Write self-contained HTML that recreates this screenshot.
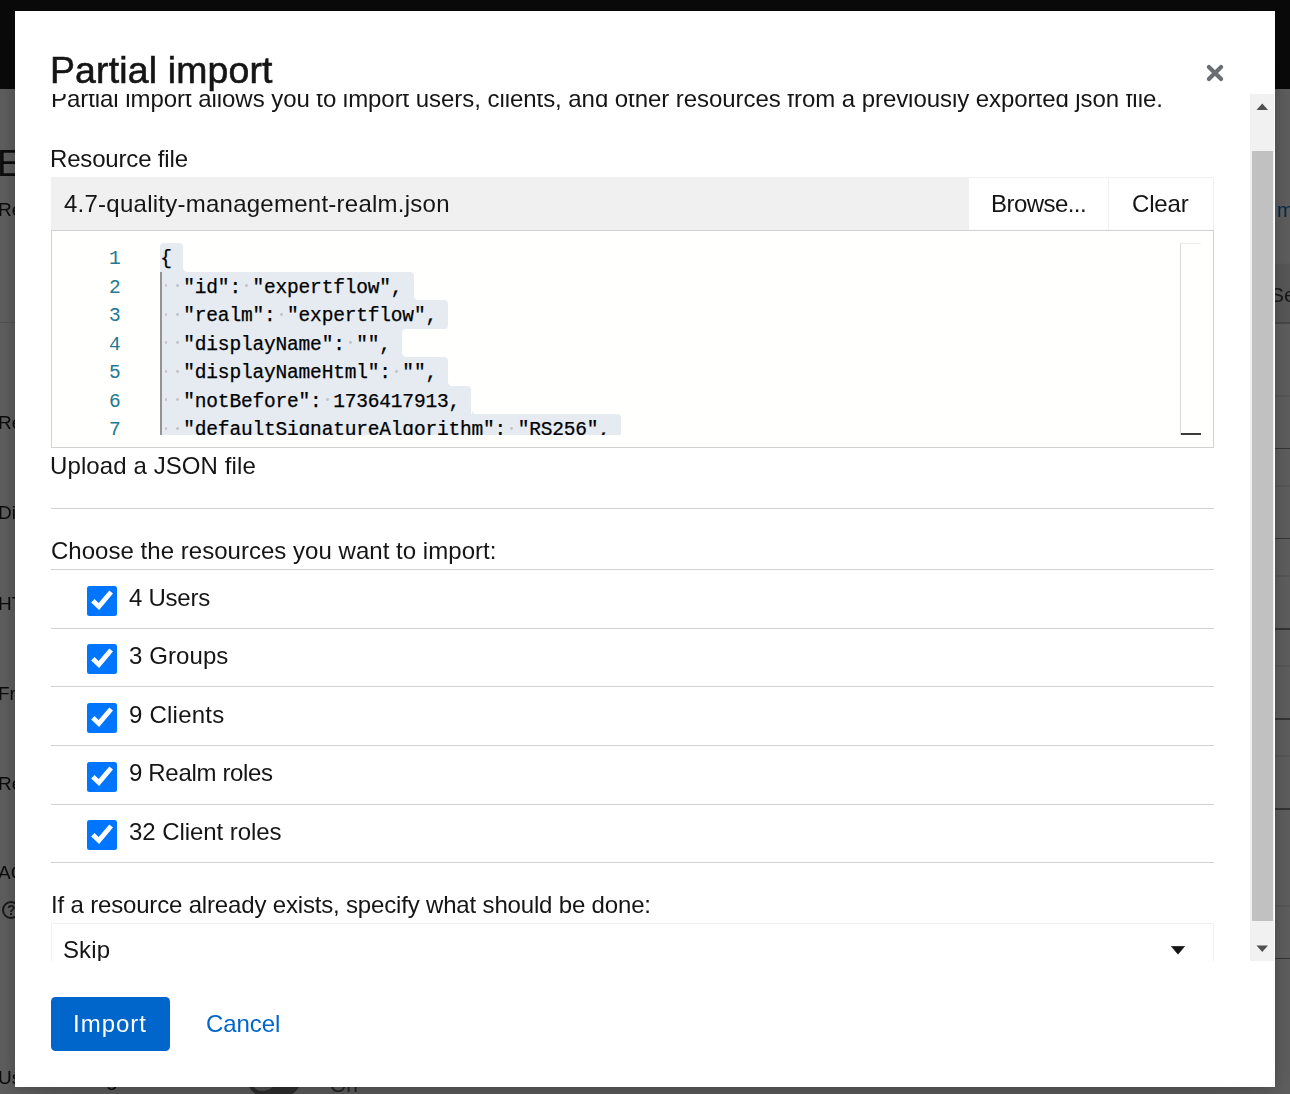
<!DOCTYPE html><html><head><meta charset="utf-8"><style>
*{box-sizing:border-box}
html,body{margin:0;padding:0}
body{width:1290px;height:1094px;overflow:hidden;position:relative;background:#616161;font-family:"Liberation Sans",sans-serif}
.t{position:absolute;white-space:pre;will-change:transform}
.t.m{will-change:auto}
.abs{position:absolute}
.m{font-family:"Liberation Mono",monospace}
</style></head><body><div class="abs" style="left:0;top:0;width:1290px;height:89px;background:#0a0a0a"></div><div class="t" style="left:-3.2px;top:144.99px;font-size:37.8px;line-height:37.8px;color:#0c0c0c">E</div><div class="t" style="left:-2.2px;top:200.31px;font-size:19px;line-height:19px;color:#0c0c0c">Re</div><div class="abs" style="left:0;top:322px;width:15px;height:1px;background:#565656"></div><div class="t" style="left:-2.2px;top:413.31px;font-size:19px;line-height:19px;color:#0c0c0c">Re</div><div class="t" style="left:-2.2px;top:502.91px;font-size:19px;line-height:19px;color:#0c0c0c">Di</div><div class="t" style="left:-2.2px;top:593.51px;font-size:19px;line-height:19px;color:#0c0c0c">HT</div><div class="t" style="left:-2.2px;top:683.91px;font-size:19px;line-height:19px;color:#0c0c0c">Fr</div><div class="t" style="left:-2.2px;top:774.41px;font-size:19px;line-height:19px;color:#0c0c0c">Re</div><div class="t" style="left:-2.2px;top:863.21px;font-size:19px;line-height:19px;color:#0c0c0c">AC</div><div class="t" style="left:-2.2px;top:1068.41px;font-size:19px;line-height:19px;color:#0c0c0c">Us</div><div class="abs" style="left:2px;top:901px;width:18px;height:18px;border:2px solid #1a1a1a;border-radius:50%"></div><div class="t" style="left:7px;top:901px;font-size:14px;line-height:18px;color:#1a1a1a;font-weight:bold">?</div><div class="t" style="left:1277px;top:199.57px;font-size:20px;line-height:20px;color:#02294f">m</div><div class="abs" style="left:1275px;top:263px;width:15px;height:59px;background:#5a5a5a;border-top:1px solid #5f5f5f"></div><div class="t" style="left:1270px;top:284.22px;font-size:21px;line-height:21px;color:#1a1a1a">Se</div><div class="abs" style="left:1275px;top:322px;width:15px;height:1.5px;background:#4a4a4a"></div><div class="abs" style="left:1275px;top:395px;width:15px;height:1.5px;background:#5a5a5a"></div><div class="abs" style="left:1275px;top:447.5px;width:15px;height:1.5px;background:#363636"></div><div class="abs" style="left:1275px;top:485px;width:15px;height:1.5px;background:#5a5a5a"></div><div class="abs" style="left:1275px;top:537.5px;width:15px;height:1.5px;background:#363636"></div><div class="abs" style="left:1275px;top:575px;width:15px;height:1.5px;background:#5a5a5a"></div><div class="abs" style="left:1275px;top:628px;width:15px;height:1.5px;background:#363636"></div><div class="abs" style="left:1275px;top:665px;width:15px;height:1.5px;background:#5a5a5a"></div><div class="abs" style="left:1275px;top:718px;width:15px;height:1.5px;background:#363636"></div><div class="abs" style="left:1275px;top:755px;width:15px;height:1.5px;background:#5a5a5a"></div><div class="abs" style="left:1275px;top:808px;width:15px;height:1.5px;background:#363636"></div><div class="abs" style="left:1275px;top:905px;width:15px;height:1.5px;background:#5a5a5a"></div><div class="abs" style="left:1275px;top:957.5px;width:15px;height:1.5px;background:#363636"></div><div class="t" style="left:106px;top:1068.22px;font-size:21px;line-height:21px;color:#0c0c0c">g</div><div class="abs" style="left:245px;top:1050px;width:58px;height:48px;border-radius:24px;background:#303030"></div><div class="abs" style="left:249px;top:1061px;width:28px;height:30px;border-radius:50%;background:#585858"></div><div class="t" style="left:330px;top:1074.22px;font-size:21px;line-height:21px;color:#262626">On</div><div class="abs" style="left:15px;top:11px;width:1260px;height:1076px;background:#fff;box-shadow:0 24px 48px rgba(3,3,3,.16),0 0 12px rgba(3,3,3,.18)"></div><div class="t" style="left:49.60px;top:51.53px;font-size:37.4px;line-height:37.4px;color:#151515;letter-spacing:0.17px;-webkit-text-stroke:0.6px #151515">Partial import</div><svg class="abs" style="left:1203px;top:61px" width="24" height="24" viewBox="0 0 24 24"><path d="M5.9 5.9L18.1 18.1M18.1 5.9L5.9 18.1" stroke="#6a6e73" stroke-width="4.2" stroke-linecap="round"/></svg><div class="abs" style="left:15px;top:94px;width:1235px;height:867px;overflow:hidden"><div class="t" style="left:35.70px;top:-7.32px;font-size:24px;line-height:24px;color:#151515;letter-spacing:-0.055px;">Partial import allows you to import users, clients, and other resources from a previously exported json file.</div><div class="t" style="left:35.20px;top:52.58px;font-size:24px;line-height:24px;color:#151515;letter-spacing:-0.17px;">Resource file</div><div class="abs" style="left:36.00px;top:83.00px;width:918.00px;height:53.00px;background:#f0f0f0"></div><div class="abs" style="left:954.00px;top:83.00px;width:245.00px;height:53.00px;border:1px solid #f0f0f0;border-left:none;border-bottom:none;background:#fff"></div><div class="abs" style="left:1093.00px;top:83.00px;width:1.00px;height:53.00px;background:#f0f0f0"></div><div class="t" style="left:49.00px;top:97.78px;font-size:24px;line-height:24px;color:#151515;letter-spacing:0.25px;">4.7-quality-management-realm.json</div><div class="t" style="left:976.30px;top:97.68px;font-size:24px;line-height:24px;color:#151515;letter-spacing:-0.56px;">Browse...</div><div class="t" style="left:1117.30px;top:97.68px;font-size:24px;line-height:24px;color:#151515;letter-spacing:-0.15px;">Clear</div><div class="abs" style="left:36.00px;top:136.00px;width:1163.00px;height:218.00px;border:1px solid #d2d2d2;background:#fffffe"></div><div class="abs" style="left:37px;top:149px;width:1161px;height:192px;background:#fffffe;overflow:hidden"><div class="abs" style="left:108.20px;top:0.00px;width:23.06px;height:28.5px;background:#e5ebf1;border-radius:4px 4px 0px 0"></div><div class="abs" style="left:131.26px;top:24.50px;width:4px;height:4px;background:radial-gradient(circle at 100% 0%, rgba(229,235,241,0) 3.5px, #e5ebf1 4.3px)"></div><div class="abs" style="left:108.20px;top:28.50px;width:253.66px;height:28.5px;background:#e5ebf1;border-radius:0px 4px 0px 0"></div><div class="abs" style="left:361.86px;top:53.00px;width:4px;height:4px;background:radial-gradient(circle at 100% 0%, rgba(229,235,241,0) 3.5px, #e5ebf1 4.3px)"></div><div class="abs" style="left:108.20px;top:57.00px;width:288.25px;height:28.5px;background:#e5ebf1;border-radius:0px 4px 4px 0"></div><div class="abs" style="left:350.33px;top:85.50px;width:4px;height:4px;background:radial-gradient(circle at 100% 100%, rgba(229,235,241,0) 3.5px, #e5ebf1 4.3px)"></div><div class="abs" style="left:108.20px;top:85.50px;width:242.13px;height:28.5px;background:#e5ebf1;border-radius:0px 0px 0px 0"></div><div class="abs" style="left:350.33px;top:110.00px;width:4px;height:4px;background:radial-gradient(circle at 100% 0%, rgba(229,235,241,0) 3.5px, #e5ebf1 4.3px)"></div><div class="abs" style="left:108.20px;top:114.00px;width:288.25px;height:28.5px;background:#e5ebf1;border-radius:0px 4px 0px 0"></div><div class="abs" style="left:396.45px;top:138.50px;width:4px;height:4px;background:radial-gradient(circle at 100% 0%, rgba(229,235,241,0) 3.5px, #e5ebf1 4.3px)"></div><div class="abs" style="left:108.20px;top:142.50px;width:311.31px;height:28.5px;background:#e5ebf1;border-radius:0px 4px 0px 0"></div><div class="abs" style="left:419.51px;top:167.00px;width:4px;height:4px;background:radial-gradient(circle at 100% 0%, rgba(229,235,241,0) 3.5px, #e5ebf1 4.3px)"></div><div class="abs" style="left:108.20px;top:171.00px;width:461.20px;height:28.5px;background:#e5ebf1;border-radius:0px 4px 0px 0"></div><div class="abs" style="left:108.10px;top:29px;width:1.5px;height:200px;background:#939393"></div><div class="t m" style="left:18px;width:50.5px;text-align:right;top:2.16px;font-size:19.5px;line-height:28.5px;color:#237893;letter-spacing:-0.2px">1</div><div class="t m" style="left:108.20px;top:2.16px;font-size:19.5px;line-height:28.5px;color:#000;letter-spacing:-0.170px;-webkit-text-stroke:0.25px #000">{</div><div class="t m" style="left:18px;width:50.5px;text-align:right;top:30.66px;font-size:19.5px;line-height:28.5px;color:#237893;letter-spacing:-0.2px">2</div><div class="t m" style="left:108.20px;top:30.66px;font-size:19.5px;line-height:28.5px;color:#000;letter-spacing:-0.170px;-webkit-text-stroke:0.25px #000">  "id": "expertflow",</div><div class="abs" style="left:112.56px;top:41.40px;width:2.8px;height:2.8px;border-radius:50%;background:#c2c5cc"></div><div class="abs" style="left:124.09px;top:41.40px;width:2.8px;height:2.8px;border-radius:50%;background:#c2c5cc"></div><div class="abs" style="left:193.27px;top:41.40px;width:2.8px;height:2.8px;border-radius:50%;background:#c2c5cc"></div><div class="t m" style="left:18px;width:50.5px;text-align:right;top:59.16px;font-size:19.5px;line-height:28.5px;color:#237893;letter-spacing:-0.2px">3</div><div class="t m" style="left:108.20px;top:59.16px;font-size:19.5px;line-height:28.5px;color:#000;letter-spacing:-0.170px;-webkit-text-stroke:0.25px #000">  "realm": "expertflow",</div><div class="abs" style="left:112.56px;top:69.90px;width:2.8px;height:2.8px;border-radius:50%;background:#c2c5cc"></div><div class="abs" style="left:124.09px;top:69.90px;width:2.8px;height:2.8px;border-radius:50%;background:#c2c5cc"></div><div class="abs" style="left:227.87px;top:69.90px;width:2.8px;height:2.8px;border-radius:50%;background:#c2c5cc"></div><div class="t m" style="left:18px;width:50.5px;text-align:right;top:87.66px;font-size:19.5px;line-height:28.5px;color:#237893;letter-spacing:-0.2px">4</div><div class="t m" style="left:108.20px;top:87.66px;font-size:19.5px;line-height:28.5px;color:#000;letter-spacing:-0.170px;-webkit-text-stroke:0.25px #000">  "displayName": "",</div><div class="abs" style="left:112.56px;top:98.40px;width:2.8px;height:2.8px;border-radius:50%;background:#c2c5cc"></div><div class="abs" style="left:124.09px;top:98.40px;width:2.8px;height:2.8px;border-radius:50%;background:#c2c5cc"></div><div class="abs" style="left:297.04px;top:98.40px;width:2.8px;height:2.8px;border-radius:50%;background:#c2c5cc"></div><div class="t m" style="left:18px;width:50.5px;text-align:right;top:116.16px;font-size:19.5px;line-height:28.5px;color:#237893;letter-spacing:-0.2px">5</div><div class="t m" style="left:108.20px;top:116.16px;font-size:19.5px;line-height:28.5px;color:#000;letter-spacing:-0.170px;-webkit-text-stroke:0.25px #000">  "displayNameHtml": "",</div><div class="abs" style="left:112.56px;top:126.90px;width:2.8px;height:2.8px;border-radius:50%;background:#c2c5cc"></div><div class="abs" style="left:124.09px;top:126.90px;width:2.8px;height:2.8px;border-radius:50%;background:#c2c5cc"></div><div class="abs" style="left:343.16px;top:126.90px;width:2.8px;height:2.8px;border-radius:50%;background:#c2c5cc"></div><div class="t m" style="left:18px;width:50.5px;text-align:right;top:144.66px;font-size:19.5px;line-height:28.5px;color:#237893;letter-spacing:-0.2px">6</div><div class="t m" style="left:108.20px;top:144.66px;font-size:19.5px;line-height:28.5px;color:#000;letter-spacing:-0.170px;-webkit-text-stroke:0.25px #000">  "notBefore": 1736417913,</div><div class="abs" style="left:112.56px;top:155.40px;width:2.8px;height:2.8px;border-radius:50%;background:#c2c5cc"></div><div class="abs" style="left:124.09px;top:155.40px;width:2.8px;height:2.8px;border-radius:50%;background:#c2c5cc"></div><div class="abs" style="left:273.99px;top:155.40px;width:2.8px;height:2.8px;border-radius:50%;background:#c2c5cc"></div><div class="t m" style="left:18px;width:50.5px;text-align:right;top:173.16px;font-size:19.5px;line-height:28.5px;color:#237893;letter-spacing:-0.2px">7</div><div class="t m" style="left:108.20px;top:173.16px;font-size:19.5px;line-height:28.5px;color:#000;letter-spacing:-0.170px;-webkit-text-stroke:0.25px #000">  "defaultSignatureAlgorithm": "RS256",</div><div class="abs" style="left:112.56px;top:183.90px;width:2.8px;height:2.8px;border-radius:50%;background:#c2c5cc"></div><div class="abs" style="left:124.09px;top:183.90px;width:2.8px;height:2.8px;border-radius:50%;background:#c2c5cc"></div><div class="abs" style="left:458.46px;top:183.90px;width:2.8px;height:2.8px;border-radius:50%;background:#c2c5cc"></div></div><div class="abs" style="left:1165.00px;top:149.00px;width:21.00px;height:192.00px;border-left:1px solid #dadada;border-top:1px solid #ececec"></div><div class="abs" style="left:1166.00px;top:339.00px;width:20.00px;height:2.00px;background:#3c3c3c"></div><div class="t" style="left:35.40px;top:359.68px;font-size:24px;line-height:24px;color:#151515;letter-spacing:0.1px;">Upload a JSON file</div><div class="abs" style="left:36.00px;top:414.00px;width:1163.00px;height:1.00px;background:#d2d2d2"></div><div class="t" style="left:35.90px;top:444.58px;font-size:24px;line-height:24px;color:#151515;letter-spacing:0.03px;">Choose the resources you want to import:</div><div class="abs" style="left:36.00px;top:475.00px;width:1163.00px;height:1.00px;background:#d2d2d2"></div><svg class="abs" style="left:72px;top:492.00px" width="30" height="30" viewBox="0 0 30 30"><rect x="0" y="0" width="30" height="30" rx="2.5" fill="#0075ff"/><path d="M4.2 16.6L7.5 13.1L11.6 16.9L22.3 4.6L26 7.5L12.1 24.1Z" fill="#fff"/></svg><div class="t" style="left:113.50px;top:491.68px;font-size:24px;line-height:24px;color:#151515;letter-spacing:-0.25px;">4 Users</div><div class="abs" style="left:36.00px;top:534.00px;width:1163.00px;height:1.00px;background:#d2d2d2"></div><svg class="abs" style="left:72px;top:550.00px" width="30" height="30" viewBox="0 0 30 30"><rect x="0" y="0" width="30" height="30" rx="2.5" fill="#0075ff"/><path d="M4.2 16.6L7.5 13.1L11.6 16.9L22.3 4.6L26 7.5L12.1 24.1Z" fill="#fff"/></svg><div class="t" style="left:113.50px;top:550.23px;font-size:24px;line-height:24px;color:#151515;letter-spacing:0.09px;">3 Groups</div><div class="abs" style="left:36.00px;top:592.00px;width:1163.00px;height:1.00px;background:#d2d2d2"></div><svg class="abs" style="left:72px;top:609.00px" width="30" height="30" viewBox="0 0 30 30"><rect x="0" y="0" width="30" height="30" rx="2.5" fill="#0075ff"/><path d="M4.2 16.6L7.5 13.1L11.6 16.9L22.3 4.6L26 7.5L12.1 24.1Z" fill="#fff"/></svg><div class="t" style="left:113.50px;top:608.78px;font-size:24px;line-height:24px;color:#151515;letter-spacing:0.23px;">9 Clients</div><div class="abs" style="left:36.00px;top:651.00px;width:1163.00px;height:1.00px;background:#d2d2d2"></div><svg class="abs" style="left:72px;top:668.00px" width="30" height="30" viewBox="0 0 30 30"><rect x="0" y="0" width="30" height="30" rx="2.5" fill="#0075ff"/><path d="M4.2 16.6L7.5 13.1L11.6 16.9L22.3 4.6L26 7.5L12.1 24.1Z" fill="#fff"/></svg><div class="t" style="left:113.50px;top:667.33px;font-size:24px;line-height:24px;color:#151515;letter-spacing:-0.33px;">9 Realm roles</div><div class="abs" style="left:36.00px;top:710.00px;width:1163.00px;height:1.00px;background:#d2d2d2"></div><svg class="abs" style="left:72px;top:726.00px" width="30" height="30" viewBox="0 0 30 30"><rect x="0" y="0" width="30" height="30" rx="2.5" fill="#0075ff"/><path d="M4.2 16.6L7.5 13.1L11.6 16.9L22.3 4.6L26 7.5L12.1 24.1Z" fill="#fff"/></svg><div class="t" style="left:113.50px;top:725.88px;font-size:24px;line-height:24px;color:#151515;letter-spacing:-0.06px;">32 Client roles</div><div class="abs" style="left:36.00px;top:768.00px;width:1163.00px;height:1.00px;background:#d2d2d2"></div><div class="t" style="left:36.00px;top:798.58px;font-size:24px;line-height:24px;color:#151515;letter-spacing:-0.17px;">If a resource already exists, specify what should be done:</div><div class="abs" style="left:36.00px;top:829.00px;width:1163.00px;height:77.00px;border:1px solid #f0f0f0;border-bottom:none"></div><div class="t" style="left:47.50px;top:844.18px;font-size:24px;line-height:24px;color:#151515;letter-spacing:0.1px;">Skip</div><svg class="abs" style="left:1156px;top:852px" width="14" height="9" viewBox="0 0 14 9"><path d="M0.3 0.3H13.7L7 8.2Z" fill="#151515" stroke="#151515" stroke-width="0.6" stroke-linejoin="round"/></svg></div><div class="abs" style="left:1250px;top:94px;width:24px;height:867px;background:#f1f1f1"></div><div class="abs" style="left:1252px;top:151px;width:21px;height:770px;background:#c1c1c1"></div><svg class="abs" style="left:1256px;top:103px" width="13" height="8" viewBox="0 0 13 8"><path d="M0.5 7H12L6.25 0.6Z" fill="#505050"/></svg><svg class="abs" style="left:1256px;top:944.5px" width="13" height="8" viewBox="0 0 13 8"><path d="M0.5 0.6H12L6.25 7Z" fill="#505050"/></svg><div class="abs" style="left:51px;top:997px;width:119px;height:54px;background:#0066cc;border-radius:4.5px"></div><div class="t" style="left:72.80px;top:1012.08px;font-size:24px;line-height:24px;color:#fff;letter-spacing:1.0px;">Import</div><div class="t" style="left:205.80px;top:1011.68px;font-size:24px;line-height:24px;color:#0066cc;letter-spacing:-0.06px;">Cancel</div></body></html>
